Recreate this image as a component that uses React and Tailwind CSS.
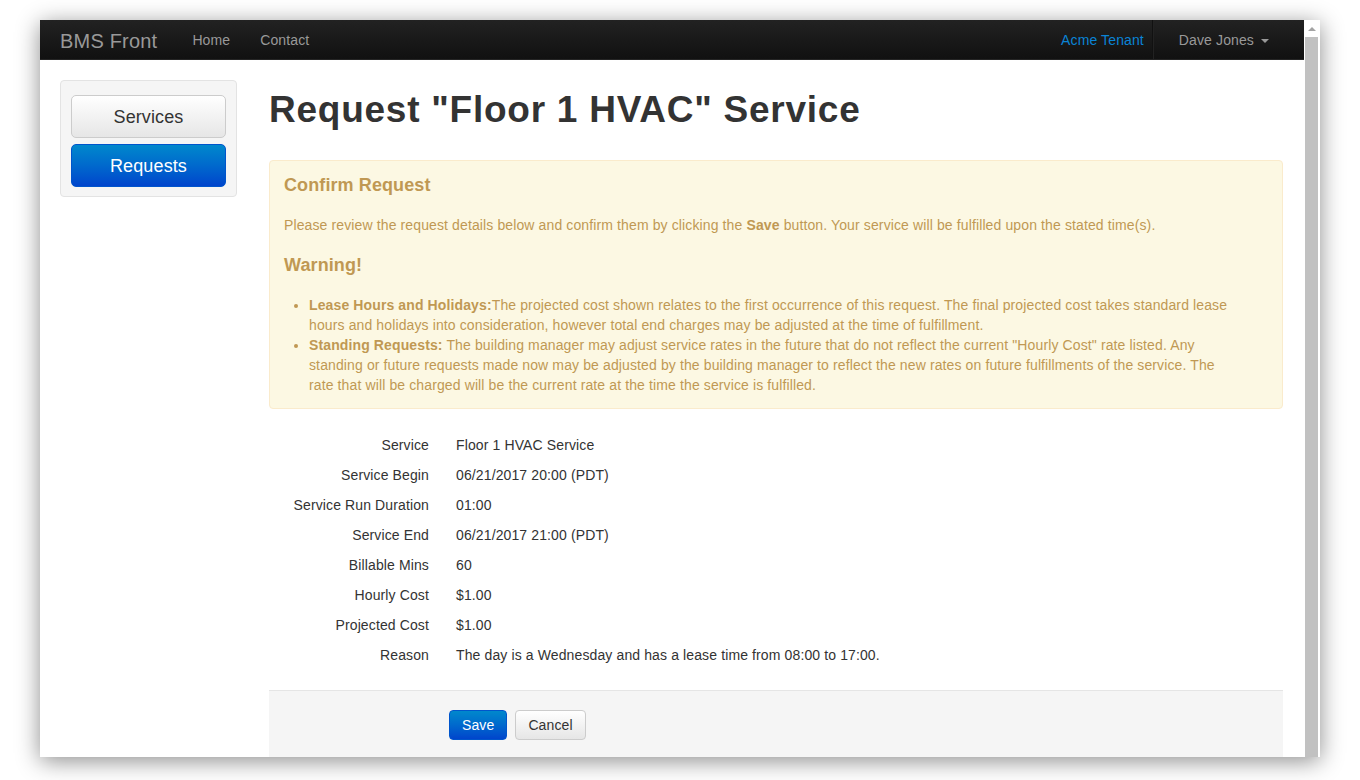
import React from 'react';

const details = [
  ['Service', 'Floor 1 HVAC Service'],
  ['Service Begin', '06/21/2017 20:00 (PDT)'],
  ['Service Run Duration', '01:00'],
  ['Service End', '06/21/2017 21:00 (PDT)'],
  ['Billable Mins', '60'],
  ['Hourly Cost', '$1.00'],
  ['Projected Cost', '$1.00'],
  ['Reason', 'The day is a Wednesday and has a lease time from 08:00 to 17:00.'],
];

const Navbar = () => (
  <div className="h-[40px] flex items-center pt-[2px] px-[20px] bg-gradient-to-b from-[#222222] to-[#111111] border-b border-[#252525] text-[14px]">
    <span className="text-[20px] text-[#999999] pr-[20px] tracking-[0.2px]">BMS Front</span>
    <a className="px-[15px] text-[#999999]">Home</a>
    <a className="px-[15px] text-[#999999]">Contact</a>
    <div className="ml-auto flex items-center h-full">
      <a className="pl-[10px] pr-[8px] text-[#0a84d6]">Acme Tenant</a>
      <div className="self-stretch mt-[-2px] w-[2px] border-l border-[#111111] bg-[#222222]" />
      <a className="pr-[15px] pl-[25px] text-[#999999] flex items-center gap-[7px]">
        Dave Jones
        <span className="w-0 h-0 border-l-[4px] border-r-[4px] border-t-[4px] border-l-transparent border-r-transparent border-t-[#999999] mt-[1px]" />
      </a>
    </div>
  </div>
);

const Sidebar = () => (
  <div className="w-[177px] shrink-0 self-start bg-[#f5f5f5] border border-[#e3e3e3] rounded-[4px] pt-[14px] pb-[9px] px-[10px] flex flex-col gap-[6px]">
    <button className="h-[43px] pt-[2px] rounded-[5px] border border-[#cccccc] bg-gradient-to-b from-[#ffffff] to-[#e6e6e6] text-[18px] text-[#333333]">
      Services
    </button>
    <button className="h-[43px] pt-[2px] rounded-[5px] border border-[#0055cc] bg-gradient-to-b from-[#0088cc] to-[#0044cc] text-[18px] text-white">
      Requests
    </button>
  </div>
);

const Alert = () => (
  <div className="mt-[30px] bg-[#fcf8e3] border border-[#faebcc] rounded-[4px] pt-[14px] pb-[13px] px-[14px] text-[#c09853] text-[14px] leading-[20px]">
    <h4 className="text-[18px] font-bold leading-[20px] tracking-[0.1px]">Confirm Request</h4>
    <p className="mt-[20px]">
      Please review the request details below and confirm them by clicking the <b>Save</b> button. Your service will be fulfilled upon the stated time(s).
    </p>
    <h4 className="mt-[20px] text-[18px] font-bold leading-[20px] tracking-[0.1px]">Warning!</h4>
    <ul className="mt-[20px] pl-[25px] pr-[30px] list-disc">
      <li>
        <b>Lease Hours and Holidays:</b>The projected cost shown relates to the first occurrence of this request. The final projected cost takes standard lease hours and holidays into consideration, however total end charges may be adjusted at the time of fulfillment.
      </li>
      <li>
        <b>Standing Requests:</b> The building manager may adjust service rates in the future that do not reflect the current "Hourly Cost" rate listed. Any standing or future requests made now may be adjusted by the building manager to reflect the new rates on future fulfillments of the service. The rate that will be charged will be the current rate at the time the service is fulfilled.
      </li>
    </ul>
  </div>
);

export default function App() {
  return (
    <div className="h-[780px] w-[1360px] overflow-hidden bg-white pt-[20px] pl-[40px] tracking-[0.12px]" style={{ fontFamily: '"Liberation Sans", Arial, sans-serif' }}>
      <div className="w-[1280px] h-[737px] flex bg-white shadow-[0_4px_22px_rgba(0,0,0,0.45)]">
        <div className="w-[1264px] h-full overflow-hidden">
          <Navbar />
          <div className="flex gap-[32px] pl-[20px] pr-[21px] pt-[20px]">
            <Sidebar />
            <div className="flex-1 min-w-0">
              <h1 className="mt-[10px] text-[37px] font-bold leading-[40px] tracking-[0.75px] text-[#333333]">Request "Floor 1 HVAC" Service</h1>
              <Alert />
              <div className="mt-[21px] grid grid-cols-[160px_1fr] gap-x-[27px] text-[14px] text-[#333333]">
                {details.map(([k, v]) => (
                  <React.Fragment key={k}>
                    <div className="text-right h-[30px] leading-[30px]">{k}</div>
                    <div className="h-[30px] leading-[30px]">{v}</div>
                  </React.Fragment>
                ))}
              </div>
              <div className="mt-[20px] bg-[#f5f5f5] border-t border-[#e5e5e5] pt-[19px] pb-[20px] pl-[180px] flex gap-[8px]">
                <button className="h-[30px] pt-[1px] px-[12px] rounded-[4px] border border-[#0055cc] bg-gradient-to-b from-[#0088cc] to-[#0044cc] text-[14px] text-white">Save</button>
                <button className="h-[30px] pt-[1px] px-[12px] rounded-[4px] border border-[#cccccc] bg-gradient-to-b from-[#ffffff] to-[#e6e6e6] text-[14px] text-[#333333]">Cancel</button>
              </div>
            </div>
          </div>
        </div>
        <div className="w-[16px] h-full bg-white flex flex-col items-center">
          <div className="mt-[7px] w-0 h-0 border-l-[4px] border-r-[4px] border-b-[4px] border-l-transparent border-r-transparent border-b-[#a3a3a3]" />
          <div className="mt-[6px] w-[13px] flex-1 bg-[#c1c1c1] ml-[-1px]" />
        </div>
      </div>
    </div>
  );
}
